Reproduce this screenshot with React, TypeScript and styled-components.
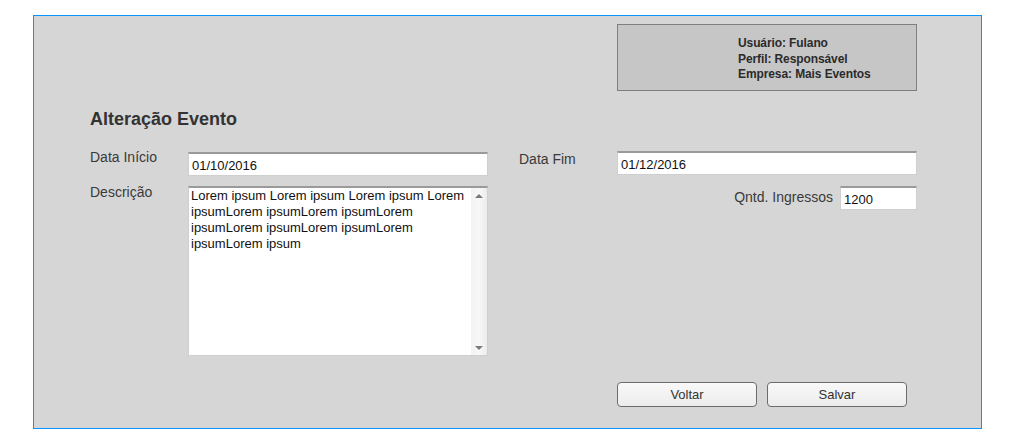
import React from "react";
import styled, { createGlobalStyle } from "styled-components";

const Global = createGlobalStyle`
  html, body { margin: 0; padding: 0; background: #ffffff; }
  body { font-family: "Liberation Sans", Arial, sans-serif; }
  #root { padding: 15px 0 0 33px; }
`;

const Frame = styled.div`
  box-sizing: border-box;
  width: 949px;
  height: 414px;
  border: 1px solid #0a94ff;
  background: #d6d6d6;
  display: grid;
  grid-template-columns: 56px 98px 300px 31px 98px 300px 1fr;
  grid-template-rows: repeat(5, auto);
  align-content: start;
  padding-top: 8px;
  color: #333333;
`;

const InfoBox = styled.div`
  grid-column: 6;
  grid-row: 1;
  box-sizing: border-box;
  height: 67px;
  background: #c6c6c6;
  border: 1px solid #7f7f7f;
  padding: 11px 0 0 120px;
  font-size: 12px;
  line-height: 15.5px;
  font-weight: bold;
  color: #2b2b2b;
  letter-spacing: -0.1px;
`;

const Title = styled.h1`
  grid-column: 2 / 4;
  grid-row: 2;
  margin: 18px 0 0;
  font-size: 18px;
  line-height: 21px;
  font-weight: bold;
  color: #333333;
`;

const Label = styled.div<{ $col: string; $row: number; $top: number; $padRight?: number }>`
  grid-column: ${(p) => p.$col};
  grid-row: ${(p) => p.$row};
  padding-top: ${(p) => p.$top}px;
  padding-right: ${(p) => p.$padRight ?? 0}px;
  text-align: ${(p) => (p.$padRight ? "right" : "left")};
  font-size: 14px;
  line-height: 16px;
  color: #3a3a3a;
  white-space: nowrap;
`;

const Field = styled.div<{ $col: number; $row: number; $top: number; $width?: number }>`
  grid-column: ${(p) => p.$col};
  grid-row: ${(p) => p.$row};
  justify-self: end;
  align-self: start;
  margin-top: ${(p) => p.$top}px;
  box-sizing: border-box;
  width: ${(p) => p.$width ?? 300}px;
  height: 24px;
  background: #ffffff;
  border: 1px solid #cfcfcf;
  border-top: 2px solid #9a9a9a;
  padding: 4px 0 0 3px;
  font-size: 13px;
  line-height: 15px;
  color: #111111;
`;

const TextBox = styled.div`
  grid-column: 3;
  grid-row: 4;
  margin-top: 10px;
  box-sizing: border-box;
  width: 300px;
  height: 170px;
  background: #ffffff;
  border: 1px solid #cfcfcf;
  border-top: 2px solid #9a9a9a;
  display: flex;
`;

const TextContent = styled.div`
  flex: 1;
  padding: 0 0 0 2px;
  font-size: 13px;
  line-height: 16px;
  color: #111111;
`;

const ScrollTrack = styled.div`
  width: 16px;
  background: linear-gradient(to right, #f2f2f2, #f8f8f8 50%, #ececec);
  display: flex;
  flex-direction: column;
  justify-content: space-between;
  align-items: center;
  padding: 6px 0 5px;
`;

const Arrow = styled.div<{ $down?: boolean }>`
  width: 0;
  height: 0;
  border-left: 4px solid transparent;
  border-right: 4px solid transparent;
  ${(p) =>
    p.$down
      ? "border-top: 4px solid #7a7a7a;"
      : "border-bottom: 4px solid #7a7a7a;"}
`;

const ButtonBar = styled.div`
  grid-column: 6;
  grid-row: 5;
  display: flex;
  gap: 10px;
  margin-top: 26px;
`;

const Button = styled.button`
  box-sizing: border-box;
  width: 140px;
  height: 25px;
  border: 1px solid #6c6c6c;
  border-radius: 4px;
  background: linear-gradient(#f9f9f9, #ececec);
  font-family: "Liberation Sans", Arial, sans-serif;
  font-size: 13px;
  color: #333333;
  padding: 0;
`;

export default function App() {
  return (
    <>
      <Global />
      <Frame>
        <InfoBox>
          <div>Usuário: Fulano</div>
          <div>Perfil: Responsável</div>
          <div>Empresa: Mais Eventos</div>
        </InfoBox>
        <Title>Alteração Evento</Title>

        <Label $col="2" $row={3} $top={19}>Data Início</Label>
        <Field $col={3} $row={3} $top={22}>01/10/2016</Field>
        <Label $col="5" $row={3} $top={21}>Data Fim</Label>
        <Field $col={6} $row={3} $top={21}>01/12/2016</Field>

        <Label $col="2" $row={4} $top={8}>Descrição</Label>
        <TextBox>
          <TextContent>
            Lorem ipsum Lorem ipsum Lorem ipsum Lorem ipsumLorem ipsumLorem ipsumLorem
            ipsumLorem ipsumLorem ipsumLorem ipsumLorem ipsum
          </TextContent>
          <ScrollTrack>
            <Arrow />
            <Arrow $down />
          </ScrollTrack>
        </TextBox>
        <Label $col="5 / 7" $row={4} $top={13} $padRight={84}>
          Qntd. Ingressos
        </Label>
        <Field $col={6} $row={4} $top={10} $width={77}>1200</Field>

        <ButtonBar>
          <Button>Voltar</Button>
          <Button>Salvar</Button>
        </ButtonBar>
      </Frame>
    </>
  );
}
